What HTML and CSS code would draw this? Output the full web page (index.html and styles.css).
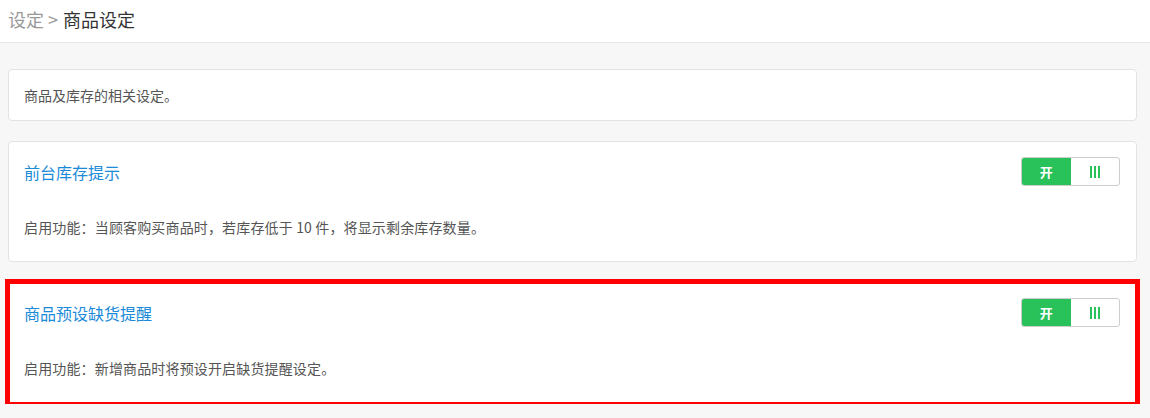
FILE: index.html
```html
<!DOCTYPE html>
<html lang="zh-CN">
    <head>
        <title>商品设定</title>
        <meta charset="utf-8">
        <meta name="viewport" content="width=device-width, initial-scale=1">
        <link rel="stylesheet" href="styles.css">
    </head>
    <body>
        <div class="page-header">
            <span class="crumb-parent">设定 &gt;</span>
            <span class="crumb-current">商品设定</span>
        </div>

        <div class="page-body">
            <div class="panel">
                <p class="panel-text">商品及库存的相关设定。</p>
            </div>

            <div class="panel">
                <div class="panel-head">
                    <h4 class="panel-title">前台库存提示</h4>
                    <div class="switch">
                        <span class="switch-on">开</span>
                        <span class="switch-off">
                            <svg width="10" height="12" viewBox="0 0 10 12"><rect x="0" y="0" width="2" height="12"/><rect x="4" y="0" width="2" height="12"/><rect x="8" y="0" width="2" height="12"/></svg>
                        </span>
                    </div>
                </div>
                <p class="panel-desc">启用功能：当顾客购买商品时，若库存低于 10 件，将显示剩余库存数量。</p>
            </div>

            <!-- highlighted setting -->
            <div class="panel panel-marked">
                <div class="panel-head">
                    <h4 class="panel-title">商品预设缺货提醒</h4>
                    <div class="switch">
                        <span class="switch-on">开</span>
                        <span class="switch-off">
                            <svg width="10" height="12" viewBox="0 0 10 12"><rect x="0" y="0" width="2" height="12"/><rect x="4" y="0" width="2" height="12"/><rect x="8" y="0" width="2" height="12"/></svg>
                        </span>
                    </div>
                </div>
                <p class="panel-desc">启用功能：新增商品时将预设开启缺货提醒设定。</p>
            </div>
        </div>
    </body>
</html>
```

FILE: styles.css
```css
body{
margin: 0;
background-color: #f7f7f7;
font-family: "Noto Sans CJK SC", "Liberation Sans", sans-serif;
color: #555;
}
.page-header{
background-color: #fff;
border-bottom: 1px solid #e6e6e6;
height: 43px;
padding: 0 8px;
display: flex;
align-items: center;
gap: 5px;
font-size: 18px;
line-height: 24px;
padding-bottom: 4px;
box-sizing: border-box;
}
.crumb-parent{
color: #999;
}
.crumb-current{
color: #333;
}
.page-body{
padding: 26px 13px 0 8px;
display: flex;
flex-direction: column;
gap: 20px;
}
.panel{
background-color: #fff;
border: 1px solid #e3e3e3;
border-radius: 4px;
padding: 15px;
}
/* red frame sits over the panel edge */
.panel-marked{
border: 5px solid #ff0000;
border-radius: 0;
margin: -3px;
padding: 14px 14px 15px 14px;
}
.panel-text{
margin: 0;
font-size: 14px;
line-height: 20px;
}
.panel-head{
display: flex;
justify-content: space-between;
align-items: center;
height: 29px;
padding-right: 1px;
}
.panel-title{
margin: 0;
font-size: 16px;
font-weight: normal;
color: #1a8ad9;
line-height: 22px;
padding-top: 1px;
}
.panel-desc{
margin: 31px 0 9px 0;
font-size: 14px;
line-height: 20px;
letter-spacing: 0.15px;
}
.switch{
display: flex;
width: 99px;
height: 29px;
box-sizing: border-box;
border: 1px solid #cdcdcd;
border-radius: 3px;
overflow: hidden;
}
.switch-on, .switch-off{
flex: 1;
display: flex;
align-items: center;
justify-content: center;
}
.switch-on{
background-color: #29c15a;
color: #fff;
font-size: 13px;
font-weight: bold;
}
.switch-off svg{
fill: #29c15a;
}
```
